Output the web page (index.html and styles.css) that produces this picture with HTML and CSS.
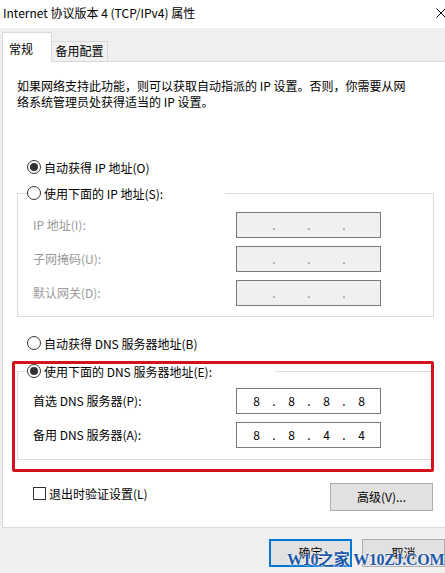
FILE: index.html
```html
<!DOCTYPE html>
<html lang="zh-CN">
<head>
<meta charset="utf-8">
<title>Internet 协议版本 4 (TCP/IPv4) 属性</title>
<link rel="stylesheet" href="styles.css">
</head>
<body>
<div class="window">
  <div class="titlebar">
    <span class="title">Internet 协议版本 4 (TCP/IPv4) 属性</span>
    <svg class="close" width="10" height="10" viewBox="0 0 10 10"><path d="M0.5 0.5 L9.5 9.5 M9.5 0.5 L0.5 9.5" stroke="#000" stroke-width="1" fill="none"/></svg>
  </div>
  <div class="tabs">
    <div class="tab active">常规</div>
    <div class="tab">备用配置</div>
  </div>
  <div class="panel">
    <p class="desc">如果网络支持此功能，则可以获取自动指派的 IP 设置。否则，你需要从网<br>络系统管理员处获得适当的 IP 设置。</p>

    <div class="radio-row first">
      <span class="radio checked"></span><span>自动获得 IP 地址(O)</span>
    </div>

    <div class="group group-ip">
      <div class="group-head head-ip">
        <span class="radio"></span><span>使用下面的 IP 地址(S):</span>
      </div>
      <div class="fields">
        <span class="label disabled">IP 地址(I):</span>
        <div class="ipfield off"><span class="seg"></span><span class="dot">.</span><span class="seg"></span><span class="dot">.</span><span class="seg"></span><span class="dot">.</span><span class="seg"></span></div>
        <span class="label disabled">子网掩码(U):</span>
        <div class="ipfield off"><span class="seg"></span><span class="dot">.</span><span class="seg"></span><span class="dot">.</span><span class="seg"></span><span class="dot">.</span><span class="seg"></span></div>
        <span class="label disabled">默认网关(D):</span>
        <div class="ipfield off"><span class="seg"></span><span class="dot">.</span><span class="seg"></span><span class="dot">.</span><span class="seg"></span><span class="dot">.</span><span class="seg"></span></div>
      </div>
    </div>

    <div class="radio-row dns-auto">
      <span class="radio"></span><span>自动获得 DNS 服务器地址(B)</span>
    </div>

    <div class="group group-dns">
      <div class="group-head head-dns">
        <span class="radio checked"></span><span>使用下面的 DNS 服务器地址(E):</span>
      </div>
      <div class="fields">
        <span class="label">首选 DNS 服务器(P):</span>
        <div class="ipfield"><span class="seg">8</span><span class="dot">.</span><span class="seg">8</span><span class="dot">.</span><span class="seg">8</span><span class="dot">.</span><span class="seg">8</span></div>
        <span class="label">备用 DNS 服务器(A):</span>
        <div class="ipfield"><span class="seg">8</span><span class="dot">.</span><span class="seg">8</span><span class="dot">.</span><span class="seg">4</span><span class="dot">.</span><span class="seg">4</span></div>
      </div>
    </div>

    <div class="bottom-row">
      <label class="check"><span class="checkbox"></span><span>退出时验证设置(L)</span></label>
      <button class="btn adv">高级(V)...</button>
    </div>
  </div>
  <div class="footer">
    <button class="btn ok">确定</button>
    <button class="btn">取消</button>
  </div>
  <div class="highlight"></div>
  <div class="watermark">W10之家 W10ZJ.COM</div>
</div>
</body>
</html>
```

FILE: styles.css
```css
* { box-sizing: border-box; }
html, body {
  margin: 0;
  padding: 0;
  width: 445px;
  height: 573px;
  overflow: hidden;
  background: #f0f0f0;
}
body {
  font-family: "Noto Sans CJK SC", "Noto Sans", sans-serif;
  font-size: 12px;
  color: #000;
}
.window {
  position: relative;
  width: 445px;
  height: 573px;
  overflow: hidden;
}
.titlebar {
  height: 28px;
  background: #fff;
  display: flex;
  align-items: center;
  justify-content: space-between;
  padding: 0 0 3px 3px;
  line-height: 16px;
}
.close { margin-right: -1px; margin-top: 1px; }
.tabs {
  height: 33px;
  display: flex;
  align-items: flex-end;
  padding-left: 2px;
}
.tab {
  height: 20px;
  width: 56px;
  border: 1px solid #d9d9d9;
  border-bottom: none;
  border-left: none;
  text-align: center;
  line-height: 18px;
  background: #f0f0f0;
}
.tab.active {
  height: 30px;
  width: 50px;
  border-left: 1px solid #d9d9d9;
  border-right: 1px solid #d9d9d9;
  background: #fff;
  text-align: left;
  padding: 8px 0 0 6px;
  line-height: 16px;
  margin-bottom: -1px;
  position: relative;
  z-index: 1;
}
.panel {
  margin-left: 2px;
  width: 450px;
  height: 467px;
  background: #fff;
  border: 1px solid #d9d9d9;
  padding-top: 16px;
}
.desc {
  margin: 0 0 0 14px;
  line-height: 16px;
  white-space: nowrap;
}
.radio-row {
  height: 20px;
  display: flex;
  align-items: center;
  margin-left: 24px;
  gap: 3px;
}
.radio-row.first { margin-top: 47px; }
.radio-row.dns-auto { margin-top: 16px; }
.radio {
  width: 14px;
  height: 14px;
  border: 1px solid #333;
  border-radius: 50%;
  display: inline-flex;
  align-items: center;
  justify-content: center;
  flex: none;
  background: #fff;
}
.radio.checked::after {
  content: "";
  width: 8px;
  height: 8px;
  border-radius: 50%;
  background: #333;
}
.group {
  margin-left: 14px;
  width: 417px;
  border: 1px solid #dcdcdc;
}
.group-ip { margin-top: 16px; padding-bottom: 10px; }
.group-dns { margin-top: 18px; padding-bottom: 11px; }
.group-head {
  height: 20px;
  margin-top: -11px;
  margin-left: 9px;
  background: #fff;
  display: flex;
  align-items: center;
  gap: 3px;
}
.head-ip { width: 198px; }
.head-dns { width: 248px; }
.fields {
  display: grid;
  grid-template-columns: 203px 145px;
  row-gap: 8px;
  align-items: center;
  padding-left: 15px;
}
.group-ip .fields { margin-top: 9px; }
.group-dns .fields { margin-top: 7px; }
.label { line-height: 16px; }
.disabled { color: #9a9a9a; }
.ipfield {
  height: 26px;
  border: 1px solid #7a7a7a;
  background: #fff;
  display: flex;
  align-items: center;
  padding-left: 2px;
  line-height: 16px;
}
.ipfield.off { background: #f0f0f0; color: #8a8a8a; }
.seg { width: 35px; text-align: center; }
.dot {
  width: 0;
  display: inline-flex;
  justify-content: center;
}
.bottom-row {
  margin-top: 23px;
  margin-left: 30px;
  width: 400px;
  display: flex;
  justify-content: space-between;
  align-items: flex-start;
}
.check {
  display: flex;
  align-items: center;
  gap: 3px;
  height: 20px;
}
.checkbox {
  width: 13px;
  height: 13px;
  border: 1px solid #333;
  background: #fff;
}
.btn {
  font-family: inherit;
  font-size: 12px;
  color: #000;
  background: #e1e1e1;
  border: 1px solid #adadad;
  height: 28px;
  width: 86px;
  padding: 0;
  line-height: 16px;
}
.btn.adv { width: 103px; }
.btn.ok { border: 2px solid #0078d7; }
.footer {
  display: flex;
  gap: 10px;
  padding: 11px 0 0 269px;
}
.highlight {
  position: absolute;
  left: 12px;
  top: 361px;
  width: 422px;
  height: 111px;
  border: 3px solid #d3131b;
  border-radius: 2px;
}
.watermark {
  position: absolute;
  left: 287px;
  top: 551px;
  font-family: "Liberation Serif", "Noto Sans CJK SC", serif;
  font-weight: bold;
  font-size: 16px;
  line-height: 18px;
  color: #1f58a8;
  letter-spacing: -0.3px;
  white-space: nowrap;
  text-shadow: 0 0 2px #fff, 0 0 2px #fff;
}
```
